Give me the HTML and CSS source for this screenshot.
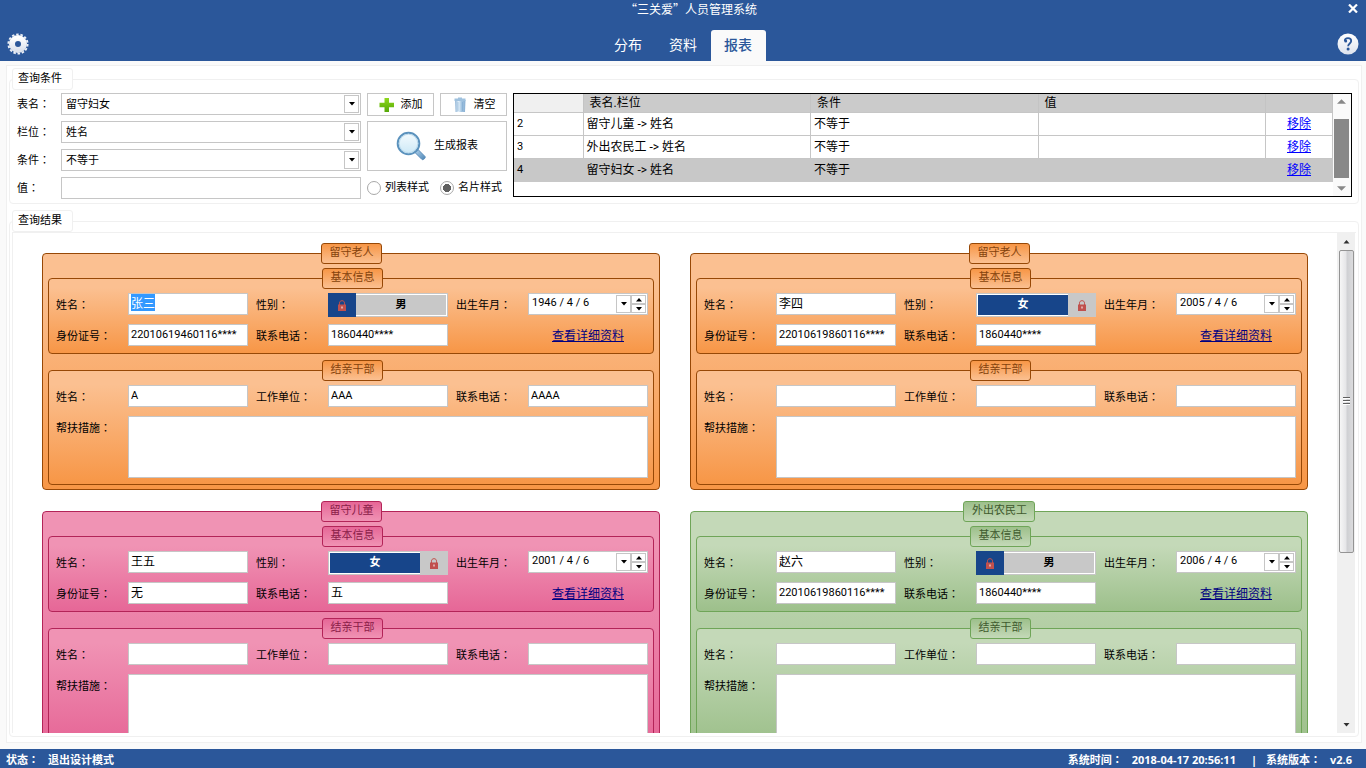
FILE: index.html
```html
<!DOCTYPE html>
<html lang="zh-CN">
<head>
<meta charset="utf-8">
<title>“三关爱”人员管理系统</title>
<link rel="stylesheet" href="styles.css">
</head>
<body>
<svg class="defs" aria-hidden="true">
  <symbol id="lock" viewBox="0 0 8 11"><path d="M1.5 5V3.2C1.5 1.5 2.5.7 4 .7S6.500 1.500 6.500 3.200V5" fill="none" stroke="#c0504d"/><path d="M0 4.500h8V11H0z" fill="#c0504d"/><path d="M3.500 6.500h1v2h-1z" fill="#fff"/></symbol>
  <symbol id="down" viewBox="0 0 6 4"><path d="M0 0h6L3 3.500z"/></symbol>
  <symbol id="up" viewBox="0 0 6 4"><path d="M0 3.500h6L3 0z"/></symbol>
</svg>
<header class="header">
  <div class="titlebar">
    <h1 class="title">“三关爱”人员管理系统</h1>
    <button class="plain close" aria-label="关闭"><svg width="10" height="9" viewBox="0 0 10 9"><path d="M1 .5l8 8M9 .5l-8 8" stroke="#fff" stroke-width="2.200"/></svg></button>
  </div>
  <div class="navbar">
    <button class="plain gear" aria-label="设置"><svg width="22" height="22" viewBox="0 0 22 22"><defs><linearGradient id="gw" x2="0" y2="1"><stop stop-color="#fff"/><stop offset="1" stop-color="#dde3ee"/></linearGradient></defs><circle cx="11" cy="11" r="6" fill="none" stroke="url(#gw)" stroke-width="6"/><circle cx="11" cy="11" r="9.600" fill="none" stroke="#eef1f7" stroke-width="1.900" stroke-dasharray="2.500 1.808"/></svg></button>
    <nav class="tabs">
      <a class="tab" href="#map">分布</a>
      <a class="tab" href="#data">资料</a>
      <a class="tab active" href="#report">报表</a>
    </nav>
    <button class="plain help" aria-label="帮助"><svg width="22" height="22" viewBox="0 0 22 22"><circle cx="11" cy="11" r="10.500" fill="url(#gw)"/><circle cx="8.700" cy="8" r="1.500" fill="#2b579a"/><path d="M7.800 8C7.800 6 9.300 5.200 11 5.200c2 0 3.200 1 3.200 2.800 0 2.400-3 2.600-3.100 5.200" fill="none" stroke="#2b579a" stroke-width="1.800"/><circle cx="11.100" cy="16" r="1.500" fill="#2b579a"/></svg></button>
  </div>
</header>

<main class="panel">
  <fieldset class="group">
    <legend>查询条件</legend>
    <div class="query">
      <div class="conditions">
        <label for="q1">表名<span class="colon" lang="zh-TW">：</span></label>
        <div class="combo"><select id="q1"><option>留守妇女</option></select><span class="drop"><svg><use href="#down"/></svg></span></div>
        <label for="q2">栏位<span class="colon" lang="zh-TW">：</span></label>
        <div class="combo"><select id="q2"><option>姓名</option></select><span class="drop"><svg><use href="#down"/></svg></span></div>
        <label for="q3">条件<span class="colon" lang="zh-TW">：</span></label>
        <div class="combo"><select id="q3"><option>不等于</option></select><span class="drop"><svg><use href="#down"/></svg></span></div>
        <label for="q4">值<span class="colon" lang="zh-TW">：</span></label>
        <input class="field" id="q4" type="text">
      </div>
      <div class="actions">
        <button class="btn"><svg width="16" height="16" viewBox="0 0 16 16"><defs><linearGradient id="gp" x2="0" y2="1"><stop stop-color="#8fd81c"/><stop offset="1" stop-color="#55a808"/></linearGradient></defs><path d="M5.500 1h4.500v4.800h5v4.400h-5V15H5.500v-4.800h-5V5.800h5z" fill="url(#gp)"/></svg>添加</button>
        <button class="btn"><svg width="16" height="16" viewBox="0 0 16 16"><defs><linearGradient id="gt"><stop stop-color="#8fb4d6"/><stop offset=".35" stop-color="#e4f1fb"/><stop offset=".6" stop-color="#a5c6e2"/><stop offset="1" stop-color="#88b0d4"/></linearGradient></defs><path d="M3 3h10.500L13 15H3.500z" fill="url(#gt)"/><path d="M2.500 1.500H6V.5h4v1h3.500V4h-11z" fill="#9fc1de"/><path d="M6 5v9M10.500 5v9" stroke="#79a6cd" opacity=".5"/></svg>清空</button>
        <button class="btn big"><svg width="30" height="30" viewBox="0 0 30 30"><defs><linearGradient id="gl" x2="0" y2="1"><stop stop-color="#f5fbfe"/><stop offset="1" stop-color="#cbe8f6"/></linearGradient><linearGradient id="gh" x2="1" y2="1"><stop stop-color="#b4d4ec"/><stop offset="1" stop-color="#4c85b6"/></linearGradient></defs><path d="M19 21.500l3-3 7 7c1 1-1.500 3.800-3 3z" fill="url(#gh)" stroke="#5a8dba"/><circle cx="12.500" cy="12.500" r="10.800" fill="url(#gl)" stroke="#5b92bd" stroke-width="2"/><circle cx="12.500" cy="12.500" r="9.300" fill="none" stroke="#b8d8ec"/></svg>生成报表</button>
        <label class="radio"><input type="radio" name="style">列表样式</label>
        <label class="radio"><input type="radio" name="style" checked>名片样式</label>
      </div>
      <div class="gridbox">
        <table class="rules">
          <colgroup><col class="c-no"><col><col><col><col class="c-act"></colgroup>
          <thead><tr><th></th><th>表名.栏位</th><th>条件</th><th>值</th><th></th></tr></thead>
          <tbody>
            <tr><td>2</td><td>留守儿童 -&gt; 姓名</td><td>不等于</td><td></td><td><a href="#r2">移除</a></td></tr>
            <tr><td>3</td><td>外出农民工 -&gt; 姓名</td><td>不等于</td><td></td><td><a href="#r3">移除</a></td></tr>
            <tr class="sel"><td>4</td><td>留守妇女 -&gt; 姓名</td><td>不等于</td><td></td><td><a href="#r4">移除</a></td></tr>
          </tbody>
        </table>
        <div class="flatbar"><svg viewBox="0 0 10 5"><path d="M0 5l5-5 5 5z"/></svg><div class="flatthumb"></div><svg viewBox="0 0 10 5"><path d="M0 0h10L5 5z"/></svg></div>
      </div>
    </div>
  </fieldset>

  <fieldset class="group results">
    <legend>查询结果</legend>
    <div class="viewport">
      <div class="cards">

        <fieldset class="card orange">
          <legend>留守老人</legend>
          <fieldset class="info">
            <legend>基本信息</legend>
            <label for="a1">姓名<span class="colon" lang="zh-TW">：</span></label><input class="cn" id="a1" value="张三">
            <label for="a2">性别<span class="colon" lang="zh-TW">：</span></label><button class="toggle male" id="a2"><span class="knob"><svg><use href="#lock"/></svg></span><span class="word">男</span></button>
            <label for="a3">出生年月<span class="colon" lang="zh-TW">：</span></label>
            <div class="date"><input id="a3" value="1946 / 4 / 6"><button class="mini" aria-label="选择日期"><svg><use href="#down"/></svg></button><div class="spin"><button class="mini" aria-label="增加"><svg><use href="#up"/></svg></button><button class="mini" aria-label="减少"><svg><use href="#down"/></svg></button></div></div>
            <label for="a4">身份证号<span class="colon" lang="zh-TW">：</span></label><input id="a4" value="22010619460116****">
            <label for="a5">联系电话<span class="colon" lang="zh-TW">：</span></label><input id="a5" value="1860440****">
            <a class="more" href="#detail">查看详细资料</a>
          </fieldset>
          <fieldset class="info">
            <legend>结亲干部</legend>
            <label for="a6">姓名<span class="colon" lang="zh-TW">：</span></label><input id="a6" value="A">
            <label for="a7">工作单位<span class="colon" lang="zh-TW">：</span></label><input id="a7" value="AAA">
            <label for="a8">联系电话<span class="colon" lang="zh-TW">：</span></label><input id="a8" value="AAAA">
            <label for="a9">帮扶措施<span class="colon" lang="zh-TW">：</span></label><textarea id="a9"></textarea>
          </fieldset>
        </fieldset>

        <fieldset class="card orange">
          <legend>留守老人</legend>
          <fieldset class="info">
            <legend>基本信息</legend>
            <label for="b1">姓名<span class="colon" lang="zh-TW">：</span></label><input class="cn" id="b1" value="李四">
            <label for="b2">性别<span class="colon" lang="zh-TW">：</span></label><button class="toggle female" id="b2"><span class="word">女</span><span class="knob"><svg><use href="#lock"/></svg></span></button>
            <label for="b3">出生年月<span class="colon" lang="zh-TW">：</span></label>
            <div class="date"><input id="b3" value="2005 / 4 / 6"><button class="mini" aria-label="选择日期"><svg><use href="#down"/></svg></button><div class="spin"><button class="mini" aria-label="增加"><svg><use href="#up"/></svg></button><button class="mini" aria-label="减少"><svg><use href="#down"/></svg></button></div></div>
            <label for="b4">身份证号<span class="colon" lang="zh-TW">：</span></label><input id="b4" value="22010619860116****">
            <label for="b5">联系电话<span class="colon" lang="zh-TW">：</span></label><input id="b5" value="1860440****">
            <a class="more" href="#detail">查看详细资料</a>
          </fieldset>
          <fieldset class="info">
            <legend>结亲干部</legend>
            <label for="b6">姓名<span class="colon" lang="zh-TW">：</span></label><input id="b6">
            <label for="b7">工作单位<span class="colon" lang="zh-TW">：</span></label><input id="b7">
            <label for="b8">联系电话<span class="colon" lang="zh-TW">：</span></label><input id="b8">
            <label for="b9">帮扶措施<span class="colon" lang="zh-TW">：</span></label><textarea id="b9"></textarea>
          </fieldset>
        </fieldset>

        <fieldset class="card pink">
          <legend>留守儿童</legend>
          <fieldset class="info">
            <legend>基本信息</legend>
            <label for="c1">姓名<span class="colon" lang="zh-TW">：</span></label><input class="cn" id="c1" value="王五">
            <label for="c2">性别<span class="colon" lang="zh-TW">：</span></label><button class="toggle female" id="c2"><span class="word">女</span><span class="knob"><svg><use href="#lock"/></svg></span></button>
            <label for="c3">出生年月<span class="colon" lang="zh-TW">：</span></label>
            <div class="date"><input id="c3" value="2001 / 4 / 6"><button class="mini" aria-label="选择日期"><svg><use href="#down"/></svg></button><div class="spin"><button class="mini" aria-label="增加"><svg><use href="#up"/></svg></button><button class="mini" aria-label="减少"><svg><use href="#down"/></svg></button></div></div>
            <label for="c4">身份证号<span class="colon" lang="zh-TW">：</span></label><input class="cn" id="c4" value="无">
            <label for="c5">联系电话<span class="colon" lang="zh-TW">：</span></label><input class="cn" id="c5" value="五">
            <a class="more" href="#detail">查看详细资料</a>
          </fieldset>
          <fieldset class="info">
            <legend>结亲干部</legend>
            <label for="c6">姓名<span class="colon" lang="zh-TW">：</span></label><input id="c6">
            <label for="c7">工作单位<span class="colon" lang="zh-TW">：</span></label><input id="c7">
            <label for="c8">联系电话<span class="colon" lang="zh-TW">：</span></label><input id="c8">
            <label for="c9">帮扶措施<span class="colon" lang="zh-TW">：</span></label><textarea id="c9"></textarea>
          </fieldset>
        </fieldset>

        <fieldset class="card green">
          <legend>外出农民工</legend>
          <fieldset class="info">
            <legend>基本信息</legend>
            <label for="d1">姓名<span class="colon" lang="zh-TW">：</span></label><input class="cn" id="d1" value="赵六">
            <label for="d2">性别<span class="colon" lang="zh-TW">：</span></label><button class="toggle male" id="d2"><span class="knob"><svg><use href="#lock"/></svg></span><span class="word">男</span></button>
            <label for="d3">出生年月<span class="colon" lang="zh-TW">：</span></label>
            <div class="date"><input id="d3" value="2006 / 4 / 6"><button class="mini" aria-label="选择日期"><svg><use href="#down"/></svg></button><div class="spin"><button class="mini" aria-label="增加"><svg><use href="#up"/></svg></button><button class="mini" aria-label="减少"><svg><use href="#down"/></svg></button></div></div>
            <label for="d4">身份证号<span class="colon" lang="zh-TW">：</span></label><input id="d4" value="22010619860116****">
            <label for="d5">联系电话<span class="colon" lang="zh-TW">：</span></label><input id="d5" value="1860440****">
            <a class="more" href="#detail">查看详细资料</a>
          </fieldset>
          <fieldset class="info">
            <legend>结亲干部</legend>
            <label for="d6">姓名<span class="colon" lang="zh-TW">：</span></label><input id="d6">
            <label for="d7">工作单位<span class="colon" lang="zh-TW">：</span></label><input id="d7">
            <label for="d8">联系电话<span class="colon" lang="zh-TW">：</span></label><input id="d8">
            <label for="d9">帮扶措施<span class="colon" lang="zh-TW">：</span></label><textarea id="d9"></textarea>
          </fieldset>
        </fieldset>

      </div>
      <div class="scrollbar"><svg><use href="#up"/></svg><div class="track"><div class="thumb"><i></i><i></i><i></i></div></div><svg><use href="#down"/></svg></div>
    </div>
  </fieldset>
</main>

<footer class="status">
  <span>状态<span class="colon" lang="zh-TW">：</span></span>
  <span>退出设计模式</span>
  <span class="push">系统时间<span class="colon" lang="zh-TW">：</span></span>
  <span>2018-04-17 20:56:11</span>
  <span class="bar">|</span>
  <span>系统版本<span class="colon" lang="zh-TW">：</span></span>
  <span>v2.6</span>
</footer>
<script src="app.js"></script>
</body>
</html>
```
FILE: styles.css
```css
* { box-sizing: border-box; }
html, body { height: 100%; }
body {
  margin: 0;
  display: flex;
  flex-direction: column;
  background: #fafafa;
  color: #000;
  font: 11px/16px Roboto, "Noto Sans CJK SC", sans-serif;
  overflow: hidden;
}
button, input, select, textarea { font: inherit; color: inherit; margin: 0; border-radius: 0; outline: 0; }
fieldset { margin: 0; padding: 0; border: 0; min-width: 0; }
svg { display: block; }
.defs { position: absolute; width: 0; height: 0; }
.colon { font-family: "Noto Sans CJK TC", sans-serif; }
.plain { background: none; border: 0; padding: 0; }

/* header */
.header { background: #2b579a; color: #fff; }
.titlebar { display: grid; grid-template-columns: 1fr auto 1fr; align-items: center; height: 18px; padding: 0 8px 0 24px; }
.title { grid-column: 2; margin: 0; font: 12px/18px "Noto Sans CJK SC", sans-serif; }
.close { justify-self: end; }
.close svg { margin-bottom: 2px; }
.navbar { display: grid; grid-template-columns: 1fr auto 1fr; align-items: end; height: 43px; padding: 12px 7px 0; }
.gear, .help { align-self: center; }
.gear { justify-self: start; }
.help { justify-self: end; }
.gear, .help { padding-bottom: 3px; }
.tabs { display: flex; height: 31px; padding-left: 0; }
.tab { width: 55px; font-size: 14px; line-height: 30px; text-align: center; color: #fff; text-decoration: none; border-radius: 3px 3px 0 0; }
.tab.active { background: #fafafa; color: #2b579a; font-weight: 500; }

/* main panel */
.panel { flex: 1; min-height: 0; display: flex; flex-direction: column; gap: 6px; margin: 4px 4px 6px 6px; padding: 2px 2px 5px; background: #fff; border: 1px solid #f0f0f0; }
.group { border: 1px solid #f0f0f0; border-radius: 4px; padding: 3px 6px 3px 5px; }
.group > legend { margin-left: -3px; height: 22px; width: 61px; padding: 0 5px; line-height: 19px; background: #fff; border: 1px solid #f0f0f0; border-radius: 3px; }
.query { display: grid; grid-template-columns: 344px 140px 1fr; gap: 6px; padding-left: 2px; }
.conditions { display: grid; grid-template-columns: 44px 1fr; grid-auto-rows: 22px; row-gap: 6px; align-items: center; }
.field, .combo { height: 22px; width: 100%; border: 1px solid #c6c6c6; background: #fff; }
.combo { position: relative; }
.combo select { appearance: none; display: block; width: 100%; height: 20px; padding: 2px 20px 0 4px; border: 0; background: #fff; }
.drop { position: absolute; top: 1px; right: 1px; width: 15px; height: 18px; border: 1px solid #c6c6c6; background: #fff; display: grid; place-items: center; pointer-events: none; }
.drop svg, .mini svg { width: 6px; height: 4px; }
.actions { display: grid; grid-template-columns: 1fr 1fr; grid-template-rows: 23px 50px 24px; gap: 5px 6px; }
.btn { display: flex; align-items: center; justify-content: center; gap: 6px; padding: 0; background: #fff; border: 1px solid #c6c6c6; }
.big { grid-column: span 2; gap: 8px; }
.radio { display: flex; align-items: center; gap: 4px; white-space: nowrap; }
.radio input { appearance: none; flex: none; width: 14px; height: 14px; border: 1px solid #a8a8a8; border-radius: 50%; background: #fff; }
.radio input:checked { background: radial-gradient(circle, #606060 0 4px, #fff 4px); }

.gridbox { display: flex; height: 104px; border: 1px solid #000; background: #fff; }
.rules { flex: 1; width: 100%; table-layout: fixed; border-collapse: collapse; align-self: flex-start; font-size: 12px; line-height: 16px; }
.c-no { width: 69px; }
.c-act { width: 67px; }
.rules th { height: 18px; padding: 1px 6px 0; background: #cbcbcb; border-right: 1px solid #c4c4c4; text-align: left; font-weight: 400; }
.rules th:first-child { background: #f0f0f0; }
.rules td { height: 23px; padding: 0 3px; border: 1px solid #c6c6c6; border-left: 0; }
.rules td:first-child { font-size: 11px; }
.rules td:last-child { text-align: center; }
.rules a { color: #00f; }
.rules .sel td { background: #c8c8c8; border-color: #c8c8c8; }
.flatbar { flex: none; width: 18px; padding: 5px 2px 4px 1px; display: flex; flex-direction: column; align-items: center; background: #fafafa; }
.flatbar svg { width: 9px; height: 5px; fill: #888; }
.flatthumb { width: 15px; height: 59px; margin: 15px 0 8px; background: #888; }

/* results */
.results { flex: 1; min-height: 0; display: flex; padding: 0 2px 3px; }
.results > legend { margin-left: 0; }
.viewport { flex: 1; min-height: 0; display: flex; border-top: 1px solid #f0f0f0; border-left: 1px solid #f0f0f0; overflow: hidden; }
.cards { flex: 1; display: grid; grid-template-columns: 1fr 1fr; align-content: start; gap: 11px 30px; padding: 10px 29px; border-right: 1px solid #f0f0f0; overflow: hidden; }
.orange { --top: #fbc091; --end: #f79646; --line: #974806; --ink: #84420c; }
.pink { --top: #f093b4; --end: #e66797; --line: #b32458; --ink: #8a2048; }
.green { --top: #c4d9b8; --end: #9dc08b; --line: #6fa558; --ink: #3f5a2e; }
.card, .info, .card legend { border: 1px solid var(--line); border-radius: 4px; }
.card, .info { background: linear-gradient(var(--top) 12%, var(--end)); }
.card { padding: 4px 5px; }
.card legend { height: 21px; margin: 0 auto; padding: 0 7px 0 8px; line-height: 18px; border-radius: 3px; color: var(--ink); background: linear-gradient(var(--end), var(--top)); }
.info { display: grid; grid-template-columns: repeat(3, 64px 1fr); grid-auto-rows: 22px; gap: 9px 8px; padding: 4px 5px 7px 7px; }
.info + .info { margin-top: 6px; padding-bottom: 6px; grid-template-rows: 22px 62px; }
.info > label { padding-top: 3px; white-space: nowrap; }
.info > input, .date, .info textarea { width: 100%; min-width: 0; border: 1px solid #c6c6c6; background: #fff; padding: 0 2px 2px; }
.info > input { height: 22px; line-height: 16px; }
.info > .cn { font-size: 12px; padding-bottom: 4px; }
.cn::selection { background: #39f; color: #fff; }
.info textarea { display: block; grid-column: 2 / -1; height: 100%; resize: none; }
.date { display: flex; height: 22px; padding: 1px; }
.date input { flex: 1; min-width: 0; border: 0; padding: 0 2px 2px; background: none; }
.mini { width: 15px; padding: 0; border: 1px solid #c6c6c6; background: #fff; display: grid; place-items: center; }
.spin { display: grid; grid-template-rows: 1fr 1fr; }
.toggle { display: flex; width: 100%; height: 24px; padding: 2px; background: #fff; border: 0; box-shadow: inset 0 0 0 1px #c6c6c6; font-weight: 700; }
.word { flex: 1; line-height: 20px; text-align: center; }
.knob { width: 28px; display: grid; place-items: center; }
.knob svg { width: 8px; height: 11px; }
.male { padding-left: 0; }
.male .knob { height: 24px; margin-top: -2px; background: #17458a; }
.male .word { background: #c8c8c8; }
.female { padding-right: 0; }
.female .word { background: #17458a; color: #fff; }
.female .knob { height: 24px; margin-top: -2px; background: #c8c8c8; }
.more { grid-column: 5 / -1; justify-self: end; padding-right: 24px; font-size: 12px; line-height: 24px; color: #000080; }

.scrollbar { width: 17px; display: flex; flex-direction: column; align-items: center; background: #f0f0f0; margin-right: 1px; }
.scrollbar svg { width: 7px; height: 4px; margin: 7px 0 6px; fill: #303030; }
.track { flex: 1; width: 15px; }
.thumb { height: 65%; border: 1px solid #949494; border-radius: 2px; background: linear-gradient(90deg, #f6f6f6, #e6e6e8 45%, #cfd0d3 55%, #dcdcde); display: flex; flex-direction: column; align-items: center; justify-content: center; gap: 1px; }
.thumb i { width: 7px; height: 2px; background: #606060; border-bottom: 1px solid #fff; }

/* status bar */
.status { display: flex; align-items: center; height: 19px; padding: 2px 14px 0 6px; background: #2b579a; color: #fff; font-weight: 700; font-family: "Open Sans", "Noto Sans CJK SC", sans-serif; gap: 9px; white-space: nowrap; }
.push { margin-left: auto; }
.bar { padding-left: 6px; }
```
FILE: app.js
```js
// Start with the first card's name field ready to be overwritten.
const first = document.getElementById('a1');
first.focus({ preventScroll: true });
first.select();
```
